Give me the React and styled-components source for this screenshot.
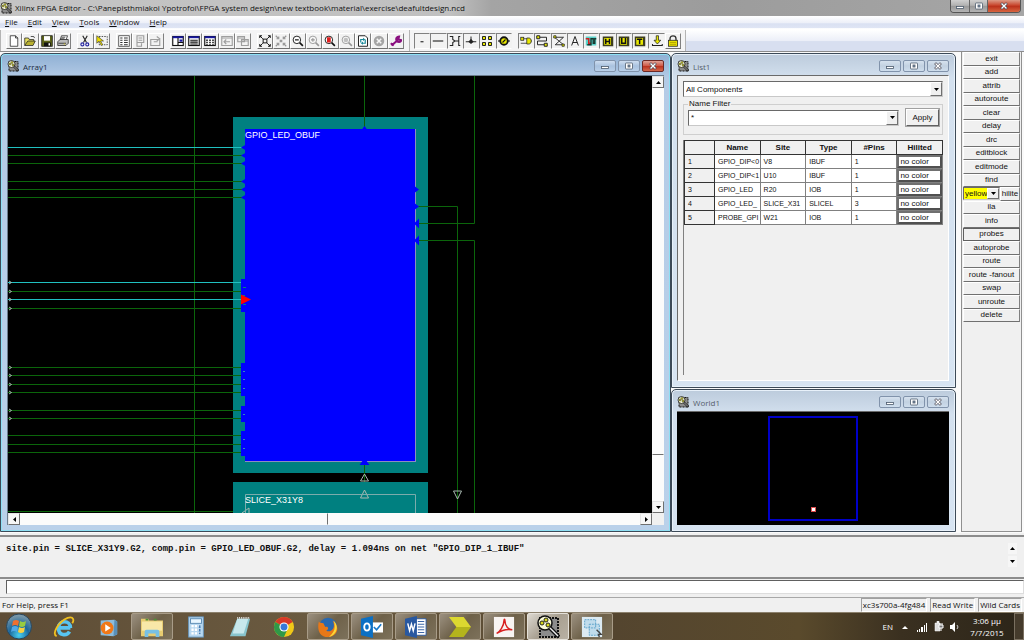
import React from 'react';
import styled, { createGlobalStyle, css } from 'styled-components';

const GlobalStyle = createGlobalStyle`
  * {
    box-sizing: border-box;
  }

  body {
    margin: 0;
    background: #f0f0f0;
    color: #111;
    font-family: 'Open Sans', 'Noto Sans', sans-serif;
    font-size: 8px;
  }

  button, input, select {
    margin: 0;
    padding: 0;
    border: 0;
    border-radius: 0;
    color: inherit;
    font: inherit;
  }

  svg {
    display: block;
  }
`;

const ui = css`
  font-family: 'Liberation Sans', Arial, sans-serif;
  font-size: 8px;
`;

const Page = styled.div`
  display: flex;
  flex-direction: column;
  height: 100vh;
  min-height: 480px;
  overflow: hidden;
`;

const TitleBar = styled.header`
  display: flex;
  height: 16px;
  background: linear-gradient(90deg, #c4c4c4 0, #c0c0c0 44%, #a4a4a4 48%, #9c9c9c 70%, #a6a6a6 100%);
`;

const AppTitle = styled.h1`
  display: flex;
  flex: 1;
  align-items: center;
  gap: 3px;
  margin: 0;
  font-size: 8px;
  font-weight: 400;
  line-height: 14px;
  white-space: nowrap;
`;

const AppControls = styled.div`
  display: flex;
  height: 13px;
  margin-right: 3px;
  border: 1px solid #555;
  border-top: 0;
  border-radius: 0 0 4px 4px;
  overflow: hidden;
`;

const AppControl = styled.button`
  display: grid;
  place-items: center;
  width: ${props => (props.$close ? 33 : 18)}px;
  background: ${props => (props.$close
    ? 'linear-gradient(#dc9a86, #c8452c 45%, #b92f1a 50%, #d8653f)'
    : 'linear-gradient(#cfcfcf, #b2b2b2 45%, #989898 50%, #b4b4b4)')};
  & + & {
    border-left: 1px solid #666;
  }
`;

const MenuBar = styled.nav`
  display: flex;
  gap: 10px;
  height: 14px;
  padding: 0 0 2px 5px;
  background: linear-gradient(#fff, #eceff8 50%, #dae1f2 55%, #dfe5f4 85%, #fff 90%);
`;

const MenuItem = styled.button`
  background: none;
  line-height: 12px;
`;

const ToolStrip = styled.div`
  display: flex;
  height: 22px;
  border-bottom: 1px solid #8c8c8c;
  background: linear-gradient(#fff, #eceff8 50%, #d8dff0 55%, #d8dff0);
`;

const ToolBand = styled.div`
  display: flex;
  align-items: center;
  gap: 6px;
  padding: 0 5px;
  border-left: 1px solid #b4b4b4;
  background: #f4f4f5;
  &:last-child {
    border-right: 1px solid #b4b4b4;
    padding: 0 4px;
  }
`;

const ToolGroup = styled.div`
  display: grid;
  grid-template-columns: repeat(${props => props.$count}, 1fr);
  width: ${props => props.$width}px;
`;

const ToolButton = styled.button`
  display: grid;
  place-items: center;
  height: 16px;
  background: #f2f2f2;
  border: 1px solid;
  border-color: ${props => (props.$flat
    ? '#808080 #f2f2f2 #fff #808080'
    : '#fff #808080 #707070 #fff')};
`;

const ToolIcon = styled.svg`
  opacity: ${props => (props.$dim ? 0.4 : 1)};
`;

const Workspace = styled.main`
  display: grid;
  flex: 1;
  grid-template-columns: minmax(0, 1fr) 285px 68px;
  min-height: 0;
  background: #fafafa;
`;

const SideColumn = styled.div`
  display: flex;
  flex-direction: column;
  gap: 1px;
  padding: 1px 0;
`;

const Frame = styled.section`
  display: flex;
  flex-direction: column;
  flex: ${props => props.$flex || '1'};
  min-width: 0;
  min-height: 0;
  padding: 0 6px 6px ${props => (props.$active ? 6 : 5)}px;
  border: 1px solid #3c4a58;
  border-radius: 5px 5px 0 0;
  background: ${props => (props.$active
    ? 'linear-gradient(#8fb0d4, #b4cbe6 24px, #bad1ea 100%)'
    : 'linear-gradient(#bccbdc, #d3e0ee 24px, #d7e4f2 100%)')};
  box-shadow: inset 0 0 0 1px ${props => (props.$active ? '#8fe0f4' : '#e8f1fa')};
`;

const ArrayColumn = styled.div`
  display: flex;
  min-width: 0;
  min-height: 0;
  padding: 1px 0;
`;

const FrameHead = styled.div`
  display: flex;
  flex: none;
  align-items: center;
  gap: 4px;
  height: 21px;
  padding-top: 3px;
  color: ${props => (props.$active ? '#1b2a3c' : '#55606c')};
`;

const FrameTitle = styled.h2`
  flex: 1;
  margin: 0;
  font-size: 8px;
  font-weight: 400;
`;

const FrameControls = styled.div`
  display: flex;
  gap: 2px;
`;

const FrameControl = styled.button`
  display: grid;
  place-items: center;
  width: 22px;
  height: 12px;
  border: 1px solid ${props => (props.$red ? '#6d2a26' : '#8193ab')};
  border-radius: 2px;
  background: ${props => (props.$red
    ? 'linear-gradient(#e0a397, #cf5a48 48%, #bb3220 52%, #d2684c)'
    : props.$active
      ? 'linear-gradient(#cfdef0, #a9c2df 50%, #b9d0ea)'
      : 'linear-gradient(#d6e2ee, #c2d1e1 50%, #cfdeed)')};
`;

const ArrayBody = styled.div`
  display: grid;
  flex: 1;
  grid-template: minmax(0, 1fr) 12px / minmax(0, 1fr) 12px;
  min-height: 0;
  border: 1px solid #6c7c8c;
  border-width: 1px 0 0 1px;
  background: #f0f0f0;
`;

const Sheet = styled.svg`
  width: 100%;
  height: 100%;
  background: #000;
  font-family: 'Liberation Sans', Arial, sans-serif;
  font-size: 9px;
`;

const ScrollBar = styled.div`
  display: flex;
  flex-direction: ${props => (props.$vertical ? 'column' : 'row')};
  min-width: 0;
  min-height: 0;
  background: #fbfbfb;
`;

const ScrollArrow = styled.button`
  display: grid;
  place-items: center;
  flex: none;
  width: 12px;
  height: 12px;
  border: 1px solid;
  border-color: #e4e4e4 #707070 #707070 #e4e4e4;
  background: #f6f6f6;
`;

const Thumb = styled.div`
  flex: ${props => props.$grow} 0 0;
  border: 1px solid;
  border-color: ${props => (props.$vertical ? '#fbfbfb #fbfbfb #707070' : '#fbfbfb #707070 #fbfbfb #fbfbfb')};
`;

const Track = styled.div`
  flex: ${props => props.$grow} 0 0;
`;

const ListBody = styled.div`
  ${ui}
  display: flex;
  flex: 1;
  flex-direction: column;
  min-height: 0;
  padding: 5px;
  border: 1px solid;
  border-color: #6a6a6a #fff #fff #6a6a6a;
  background: #f0f0f0;
`;

const Combo = styled.div`
  position: relative;
  display: flex;
  flex: ${props => (props.$grow ? '1' : 'none')};
  height: ${props => props.$height || 16}px;
  border: 1px solid;
  border-color: #696969 #c8c8c8 #c8c8c8 #696969;
  background: #fff;
`;

const Select = styled.select`
  flex: 1;
  width: 100%;
  padding-left: 2px;
  appearance: none;
  background: #fff;
`;

const ComboInput = styled.input`
  flex: 1;
  width: 100%;
  min-width: 0;
  padding-left: 2px;
`;

const ComboArrow = styled.span`
  position: absolute;
  top: 0;
  right: 0;
  bottom: 0;
  display: grid;
  place-items: center;
  width: 12px;
  border: 1px solid;
  border-color: #fff #707070 #707070 #fff;
  background: #f0f0f0;
  pointer-events: none;
`;

const FilterBox = styled.fieldset`
  display: flex;
  align-items: center;
  gap: 7px;
  min-width: 0;
  height: 36px;
  margin: 2px 0 5px;
  padding: 0 3px 0 4px;
  border: 1px solid #cfcfcf;
  line-height: 10px;
`;

const Legend = styled.legend`
  padding: 0 1px;
`;

const ApplyButton = styled.button`
  width: 33px;
  height: 17px;
  border: 1px solid;
  border-color: #fff #606060 #606060 #fff;
  outline: 1px solid #a0a0a0;
  background: #f0f0f0;
`;

const GridBox = styled.div`
  flex: 1;
  min-height: 0;
  border-left: 1px solid #808080;
`;

const Grid = styled.table`
  width: 100%;
  border-collapse: collapse;
  table-layout: fixed;
  font-size: 7px;
  line-height: 9px;
  th, td {
    height: 14px;
    padding: 0 3px;
    border: 1px solid #808080;
    background: #fff;
    text-align: left;
    font-weight: 400;
    white-space: nowrap;
    overflow: hidden;
  }
  thead th {
    border-color: #333;
    background: #f0f0f0;
    font-size: 8px;
    font-weight: 700;
    text-align: center;
  }
  tbody th {
    padding: 0 3px;
    border-color: #333;
    background: #f0f0f0;
  }
  tbody td:last-child {
    padding: 0;
  }
`;

const ColorButton = styled.button`
  display: block;
  width: 100%;
  height: 13px;
  padding: 0 1px;
  border: 2px solid;
  border-color: #707070 #505050 #505050 #707070;
  background: #fff;
  font-size: 8px;
  line-height: 8px;
  text-align: left;
`;

const World = styled.svg`
  flex: 1;
  width: 100%;
  min-height: 0;
  border-top: 1px solid #6a6a6a;
  background: #000;
`;

const CommandPanel = styled.aside`
  ${ui}
  margin: 0 2px 1px 5px;
  padding: 0 1px;
  border: 1px solid #909090;
  border-top: 0;
  background: #f0f0f0;
`;

const CommandList = styled.div`
  display: grid;
  grid-auto-rows: 1fr;
  height: 270px;
`;

const Command = styled.button`
  min-width: 0;
  border: 1px solid;
  border-color: #fff #808080 #707070 #fff;
  background: #f0f0f0;
  line-height: 10px;
  white-space: nowrap;
  ${props => props.$boxed && 'border-color: #606060;'}
`;

const HiliteRow = styled.div`
  display: grid;
  grid-template-columns: 37px minmax(0, 1fr);
`;

const ColorSelect = styled(Select)`
  padding-left: 1px;
  background: linear-gradient(90deg, #ffff00 24px, #fff 24px);
`;

const Console = styled.section`
  display: flex;
  height: 44px;
  margin-top: 2px;
  padding: 5px 7px 5px 6px;
  border-top: 2px solid #8c8c8c;
  border-bottom: 2px solid #8c8c8c;
  background: #f0f0f0;
`;

const ConsoleText = styled.output`
  flex: 1;
  font: 700 9px/14px 'Liberation Mono', 'Courier New', monospace;
  white-space: pre;
`;

const ConsoleScroll = styled.div`
  display: flex;
  flex-direction: column;
  justify-content: space-between;
  padding: 1px 0 5px;
`;

const TinyArrow = styled.button`
  display: grid;
  place-items: center;
  width: 9px;
  height: 11px;
  background: #f6f6f6;
`;

const CommandLine = styled.div`
  flex: none;
  padding: 1px 0 3px 6px;
  border-bottom: 1px solid #a8a8a8;
`;

const CommandInput = styled.input`
  display: block;
  width: 100%;
  height: 14px;
  padding: 0 4px;
  border: 1px solid;
  border-color: #606060 #ddd #ddd #606060;
  background: #fff;
`;

const StatusBar = styled.footer`
  display: flex;
  gap: 3px;
  height: 14px;
  padding: 0 2px;
  line-height: 13px;
`;

const Hint = styled.span`
  flex: 1;
`;

const StatusCell = styled.span`
  padding: 0 1px;
  border: 1px solid;
  border-color: #a0a0a0 #fff #fff #a0a0a0;
  line-height: 12px;
`;

const TaskBar = styled.div`
  display: flex;
  gap: 2px;
  height: 28px;
  border-top: 1px solid #8b806c;
  background: linear-gradient(90deg, #5e4d36, #6a5a40 30%, #54452f 60%, #5a4a2c 78%, #3a3020 88%, #2c2519);
`;

const Task = styled.button`
  display: grid;
  place-items: center;
  width: 42px;
  background: none;
  ${props => props.$open && css`
    border: 1px solid #a89c88;
    border-radius: 2px;
    background: linear-gradient(135deg, #9b9080, #6e6149 50%, #7d715b);
  `}
  ${props => props.$front && css`
    background: linear-gradient(135deg, #dcd8d0, #a89f90 50%, #b9b1a4);
    border-color: #e4e0d8;
  `}
`;

const StartButton = styled(Task)`
  width: 41px;
  padding-right: 3px;
`;

const Tray = styled.div`
  display: flex;
  flex: 1;
  justify-content: flex-end;
  align-items: center;
  gap: 6px;
  color: #fff;
`;

const TrayButton = styled.button`
  background: none;
`;

const Clock = styled.time`
  width: 42px;
  line-height: 12px;
  text-align: center;
`;

const ShowDesktop = styled.button`
  align-self: stretch;
  width: 10px;
  border: 1px solid #7a7060;
  background: #453b2c;
`;

const Chip = ({ size = 12 }) => (
  <svg width={size} height={size} viewBox="0 0 24 24" aria-hidden="true">
    <rect x="4" y="3" width="18" height="19" fill="#8c8c8c" stroke="#111" strokeWidth="2" strokeDasharray="2 1" />
    <circle cx="9" cy="8" r="7" fill="#fafad8" stroke="#111" strokeWidth="1.5" />
    <g fill="#d8d81a" stroke="#222" strokeWidth="1">
      <circle cx="6" cy="8" r="2" />
      <circle cx="10" cy="5" r="2" />
      <circle cx="12" cy="10" r="2" />
    </g>
    <path d="M14 13l9 9" stroke="#111" strokeWidth="4" />
    <path d="M14 13l8 8" stroke="#eee" strokeWidth="1.5" />
  </svg>
);

const Arrow = ({ dir = 'down' }) => {
  const turn = { down: 0, left: 90, up: 180, right: 270 }[dir];
  return (
    <svg width="7" height="7" viewBox="0 0 7 7" aria-hidden="true">
      <path d="M1 2h5L3.5 5z" fill="#000" transform={`rotate(${turn} 3.5 3.5)`} />
    </svg>
  );
};

const ControlIcon = ({ kind }) => (
  <svg width="10" height="8" viewBox="0 0 10 8" aria-hidden="true">
    {kind === 'Minimize' && <rect x="1.5" y="4.5" width="7" height="2" fill="#fff" stroke="#4b5a6c" strokeWidth=".8" />}
    {kind === 'Maximize' && (
      <g fill="#fff" stroke="#4b5a6c" strokeWidth=".8">
        <rect x="1.5" y="1" width="7" height="6" rx=".5" />
        <rect x="4" y="3" width="2" height="2" fill="#8aa0b8" />
      </g>
    )}
    {kind === 'Close' && (
      <g strokeLinecap="square">
        <path d="M3 2l4 4M7 2L3 6" stroke="#4b4a56" strokeWidth="2.6" />
        <path d="M3 2l4 4M7 2L3 6" stroke="#fff" strokeWidth="1.3" />
      </g>
    )}
  </svg>
);

const zoomGlass = fill => (
  <g>
    <path d="M9.5 9.5l5 5" stroke="#111" strokeWidth="2.2" />
    <circle cx="6.5" cy="6.5" r="5" fill="#fff" stroke="#222" strokeWidth="1.3" />
    {fill}
  </g>
);

const letterBox = letter => (
  <g>
    <rect x="1" y="2" width="14" height="13" fill="#3c3c20" />
    <rect x="3" y="4" width="9" height="9" fill="#e8e800" />
    <path d={letter} stroke="#111" strokeWidth="2" fill="none" />
  </g>
);

const icons = {
  New: <path d="M3 1h7l3 3v11H3zM10 1v3h3" fill="#fff" stroke="#222" />,
  Open: (
    <g stroke="#222">
      <path d="M1 14V4h5l1 2h6v3" fill="#e8e060" />
      <path d="M1 14l4-6h10l-3 6z" fill="#b8b030" />
      <path d="M9 2h4l1 2" fill="none" />
    </g>
  ),
  Save: (
    <g>
      <rect x="1" y="1" width="14" height="14" fill="#5c6418" stroke="#111" />
      <rect x="4" y="1.5" width="8" height="6" fill="#fff" />
      <path d="M4 10h9v5H4z" fill="#111" />
      <path d="M10 11h2v3h-2z" fill="#fff" />
    </g>
  ),
  Print: (
    <g stroke="#222">
      <path d="M4 7l2-6h8l-2 6z" fill="#fff" />
      <path d="M1 9l3-3h11v5l-3 3H1z" fill="#bbb" />
      <path d="M6 3h5M5 5h5M2 11h10" fill="none" />
      <path d="M9 12h2" stroke="#d8c800" />
    </g>
  ),
  Cut: (
    <g fill="none" strokeWidth="1.5">
      <path d="M5 1l5 9M11 1L6 10" stroke="#222" />
      <circle cx="4.5" cy="12.5" r="2" stroke="#2020a0" />
      <circle cx="11" cy="12.5" r="2" stroke="#2020a0" />
    </g>
  ),
  SelectArea: (
    <g>
      <rect x="4" y="2" width="11" height="11" fill="none" stroke="#222" strokeDasharray="2 1.5" />
      <path d="M1 1v10l3-3 3 6 2-1-3-5h4z" fill="#f0e000" stroke="#333" strokeWidth=".8" />
    </g>
  ),
  Properties: (
    <g stroke="#333" fill="#fff">
      <rect x="1" y="1" width="14" height="14" />
      <path d="M3 4h3M8 4h5M3 7h3M8 7h5M3 10h3M8 10h5M3 13h3M8 13h5" strokeWidth="1.6" />
    </g>
  ),
  Sheet: <path d="M4 1h9v9H4zM6 4h5M6 7h5M4 10v5h6v-4" fill="none" stroke="#222" strokeWidth="1.5" />,
  Export: <path d="M1 6h12v8H1zM5 9h5M9 2l4 3-4 3" fill="none" stroke="#222" strokeWidth="1.5" />,
  ArrayView: (
    <g>
      <rect x="1" y="2" width="14" height="12" fill="#fff" stroke="#111" strokeWidth="1.5" />
      <path d="M1 3h14" stroke="#1818a0" strokeWidth="2.5" />
      <path d="M8 4v10M8 10h7" stroke="#111" strokeWidth="1.5" />
      <rect x="10" y="6" width="4" height="3" fill="#1818a0" />
    </g>
  ),
  ListView: (
    <g>
      <rect x="1" y="2" width="14" height="12" fill="#fff" stroke="#111" strokeWidth="1.5" />
      <path d="M1 3h14" stroke="#1818a0" strokeWidth="2.5" />
      <path d="M3 7h10M3 9.5h10M3 12h10" stroke="#111" strokeWidth="1.6" />
    </g>
  ),
  TableView: (
    <g>
      <rect x="1" y="2" width="14" height="12" fill="#fff" stroke="#111" strokeWidth="1.5" />
      <path d="M1 3h14" stroke="#1818a0" strokeWidth="2.5" />
      <path d="M4 6v7M8 6v7M12 6v7" stroke="#111" strokeWidth="2" strokeDasharray="2 1" />
    </g>
  ),
  Back: <path d="M1 2h14v12H1zM1 4h14M4 9h8M7 6L4 9l3 3" fill="none" stroke="#222" strokeWidth="1.5" />,
  Cascade: <path d="M1 2h9v7H1zM6 6h9v8H6zM1 4h9M6 8h9" fill="none" stroke="#222" strokeWidth="1.5" />,
  FitAll: (
    <g fill="none" stroke="#111" strokeWidth="1.3">
      <path d="M1 4V1h3M12 1h3v3M15 12v3h-3M4 15H1v-3M1 1l4 4M15 1l-4 4M15 15l-4-4M1 15l4-4" />
      <rect x="5.5" y="5.5" width="5" height="5" />
    </g>
  ),
  FitSel: <path d="M2 5h3V2M11 2v3h3M14 11h-3v3M5 14v-3H2M1 1l3 3M15 1l-3 3M15 15l-3-3M1 15l3-3M7 7h2v2H7z" fill="none" stroke="#111" strokeWidth="1.5" />,
  ZoomOut: zoomGlass(<path d="M4 6.5h5" stroke="#111" strokeWidth="1.6" />),
  ZoomIn: zoomGlass(<path d="M4 6.5h5M6.5 4v5" stroke="#111" strokeWidth="1.4" />),
  ZoomBox: zoomGlass(<rect x="4" y="3" width="5" height="7" fill="#e02020" />),
  ZoomSel: zoomGlass(<circle cx="6.5" cy="6.5" r="3" fill="#777" />),
  Refresh: (
    <g>
      <path d="M2 1h9l3 3v11H2z" fill="#fff" stroke="#222" strokeWidth="1.3" />
      <path d="M5 10V6h4M11 6v5H7" fill="none" stroke="#1c8a9a" strokeWidth="1.6" />
      <path d="M8 3.5L11 6 8 8zM8 8.5L5 11l3 2z" fill="#1c8a9a" />
    </g>
  ),
  Stop: (
    <g>
      <circle cx="8" cy="8" r="7" fill="#333" />
      <path d="M5 5l6 6M11 5l-6 6" stroke="#fff" strokeWidth="2" />
    </g>
  ),
  Wrench: <path d="M2 14l7-6M9 8c-2-4 1-6 3-6l-1 4 4 1c-1 3-4 3-6 1M1 11l4 3" fill="none" stroke="#8a1080" strokeWidth="2.8" />,
  Pin: <path d="M6 9h4" stroke="#222" strokeWidth="1.5" />,
  Wire: <path d="M1 8h14" stroke="#222" strokeWidth="1.5" />,
  Switch: <path d="M1 2h4v4l3 2-3 2v4H1M8 8h5M15 2h-2v12h2" fill="none" stroke="#222" strokeWidth="1.4" />,
  Node: (
    <g>
      <path d="M1 9h14M8 2v7" stroke="#222" strokeWidth="1.3" />
      <path d="M4.5 9L8 5l3.500 4L8 12z" fill="#222" />
    </g>
  ),
  Blocks: <path d="M2 2h4v4H2zM10 2h4v4h-4zM2 10h4v4H2zM10 10h4v4h-4z" fill="#e8e800" stroke="#111" strokeWidth="1.2" />,
  Probe: (
    <g>
      <path d="M0 8h16" stroke="#111" strokeWidth="1.5" />
      <circle cx="8" cy="8" r="5" fill="#e8e800" stroke="#111" strokeWidth="2.4" />
      <path d="M6 10l4-4" stroke="#111" strokeWidth="1.5" />
    </g>
  ),
  Component: (
    <g stroke="#222" fill="#e8e800">
      <rect x="1" y="3" width="4" height="4" />
      <path d="M9 4h3c4 0 4 8 0 8H9z" />
      <path d="M5 5h4M1 11h8M15 8h1" />
    </g>
  ),
  Route: (
    <g stroke="#222" strokeWidth="1.3">
      <path d="M5 3h9v5H2v5h9" fill="none" />
      <path d="M1 1h4v4H1zM11 11h4v4h-4z" fill="#e8e800" />
    </g>
  ),
  Rats: (
    <g stroke="#222" fill="#e8e800">
      <path d="M1 3h13L3 13h12M2 3l12 10" fill="none" strokeWidth="1.2" />
      <path d="M1 1h3v3H1zM12 12h3v3h-3z" />
    </g>
  ),
  Text: <path d="M3.5 14L8 2l4.500 12M5 10h6" fill="none" stroke="#222" strokeWidth="1.3" />,
  Wave: (
    <g>
      <rect x="1" y="2" width="14" height="12" fill="#58d0c8" />
      <path d="M1 5h4v6h3" fill="none" stroke="#d02020" strokeWidth="2" />
      <path d="M3 13h5V5h3v6h2V5h2" fill="none" stroke="#183830" strokeWidth="1.8" />
    </g>
  ),
  Hard: letterBox('M5 5v7M10 5v7M5 8.5h5'),
  User: letterBox('M5 4v7h5V4'),
  Timing: letterBox('M4 5.5h7M7.5 5v7'),
  Download: (
    <g>
      <path d="M7 1h3v6h3l-4.500 5L4 7h3z" fill="#e8e800" stroke="#222" />
      <path d="M2 12v2h13v-2" fill="none" stroke="#222" strokeWidth="1.4" />
    </g>
  ),
  Lock: (
    <g>
      <path d="M4 8V5c0-5 8-5 8 0v3" fill="none" stroke="#333" strokeWidth="1.8" />
      <rect x="2" y="7" width="12" height="8" fill="#e8e000" stroke="#222" />
      <path d="M4 10h8M4 12.5h8" stroke="#a89800" />
    </g>
  ),
};

const mainTools = [
  { width: 65, names: ['New', 'Open', 'Save', 'Print'] },
  { width: 33, names: ['Cut', 'SelectArea'] },
  { width: 48, names: ['Properties', 'Sheet', 'Export'] },
  { width: 81, names: ['ArrayView', 'ListView', 'TableView', 'Back', 'Cascade'] },
  { width: 147, names: ['FitAll', 'FitSel', 'ZoomOut', 'ZoomIn', 'ZoomBox', 'ZoomSel', 'Refresh', 'Stop', 'Wrench'] },
];

const layerTools = [
  { width: 98, names: ['Pin', 'Wire', 'Switch', 'Node', 'Blocks', 'Probe'] },
  { width: 163, names: ['Component', 'Route', 'Rats', 'Text', 'Wave', 'Hard', 'User', 'Timing', 'Download', 'Lock'] },
];

const disabled = ['Sheet', 'Export', 'Back', 'Cascade', 'FitSel', 'ZoomIn', 'ZoomSel', 'Stop'];

const Tools = ({ groups, flat }) => groups.map(group => (
  <ToolGroup key={group.names[0]} $count={group.names.length} $width={group.width}>
    {group.names.map(name => (
      <ToolButton key={name} aria-label={name} $flat={flat && name !== 'Lock'}>
        <ToolIcon width="12" height="12" viewBox="0 0 16 16" $dim={disabled.includes(name)}>
          {icons[name]}
        </ToolIcon>
      </ToolButton>
    ))}
  </ToolGroup>
));

const menus = ['File', 'Edit', 'View', 'Tools', 'Window', 'Help'];

const components = [
  ['GPIO_DIP<0', 'V8', 'IBUF', 1],
  ['GPIO_DIP<1', 'U10', 'IBUF', 1],
  ['GPIO_LED', 'R20', 'IOB', 1],
  ['GPIO_LED_', 'SLICE_X31', 'SLICEL', 3],
  ['PROBE_GPI', 'W21', 'IOB', 1],
];

const commandsTop = ['exit', 'add', 'attrib', 'autoroute', 'clear', 'delay', 'drc', 'editblock', 'editmode', 'find'];
const commandsBottom = ['ila', 'info', 'probes', 'autoprobe', 'route', 'route -fanout', 'swap', 'unroute', 'delete'];

const WindowFrame = ({ title, active, flex, children }) => (
  <Frame $active={active} $flex={flex}>
    <FrameHead $active={active}>
      <Chip />
      <FrameTitle>{title}</FrameTitle>
      <FrameControls>
        {['Minimize', 'Maximize', 'Close'].map(kind => (
          <FrameControl key={kind} aria-label={kind} $active={active} $red={active && kind === 'Close'}>
            <ControlIcon kind={kind} />
          </FrameControl>
        ))}
      </FrameControls>
    </FrameHead>
    {children}
  </Frame>
);

// wires entering the slice from the left, by y
const greenWires = [155, 163, 181, 189, 197, 291, 308, 367, 375, 384, 392, 410, 418, 435, 444, 452];
const cyanWires = [147, 282, 299];
const outPins = [282, 291, 299, 308, 367, 375, 384, 392, 410, 418];
const smallPins = [147, 155, 163, 181, 189, 197];
const dotPins = [371, 379, 388, 414, 439, 448];

const ArraySheet = () => (
  <Sheet role="img" aria-label="Slice layout">
    <g transform="translate(-8 -76)">
      <rect x="233" y="117" width="195" height="356" fill="#008080" />
      <rect x="233" y="482" width="195" height="60" fill="#008080" />
      <g stroke="#0b650b" fill="none">
        {greenWires.map(y => <path key={y} d={`M8 ${y}.5H245`} />)}
        <path d="M8 511.5H233M194.5 76V540M364.5 76V128M364.5 464V482" />
        <path d="M418 206.5H457.5V540M418 223.5H474.5V76M418 240.5H474.5V540" />
      </g>
      <rect x="245.5" y="129.5" width="170" height="332" fill="#0000ff" stroke="#8c8cc0" />
      <path d="M245 129h170v1h-169v331h-1z" fill="#0000ff" />
      <g stroke="#20c0c0">
        {cyanWires.map(y => <path key={y} d={`M8 ${y}.5H245`} />)}
      </g>
      <g fill="#0000ff">
        {smallPins.map(y => <path key={y} d={`M241 ${y}.5l5-3v6z`} />)}
        <path d="M241 279h5v33h-5zM241 363h5v33h-5zM241 406h5v16h-5zM241 431h5v25h-5z" />
        <path d="M419 189.5l-4-3v6zM419 206.5l-4-3v6zM414 223.5l5-5v10zM414 240.5l5-5v10z" />
        <path d="M364.5 126l3 4h-6zM364.5 458l5 7h-10z" />
      </g>
      <path d="M243 287h3v1h-3zM243 304h3v1h-3zM241 295h4v1h-4z" fill="#008080" />
      {dotPins.map(y => <rect key={y} x="243" y={y} width="2" height="1" fill="#3088b8" />)}
      <path d="M241 294.5v10l10-5z" fill="#f00" />
      <g fill="none" stroke="#a8b8b0">
        {outPins.map(y => <path key={y} d={`M9 ${y - 1}l2.500 1.500-2.500 1.500`} />)}
        <path d="M364.5 474l4 7h-8zM364.5 490l4 8h-8zM457.5 499l-4-8h8zM242 513l7-5v8z" />
        <path d="M245.5 540V494.5H415.5V540" stroke="#7cacac" />
      </g>
      <text x="245" y="138" fill="#fff">GPIO_LED_OBUF</text>
      <text x="245" y="503" fill="#fff">SLICE_X31Y8</text>
    </g>
  </Sheet>
);

const ArrayWindow = () => (
  <ArrayColumn>
    <WindowFrame title="Array1" active>
      <ArrayBody>
        <ArraySheet />
        <ScrollBar $vertical>
          <ScrollArrow aria-label="Scroll up"><Arrow dir="up" /></ScrollArrow>
          <Thumb $vertical $grow={367} />
          <Track $grow={46} />
          <ScrollArrow aria-label="Scroll down"><Arrow /></ScrollArrow>
        </ScrollBar>
        <ScrollBar>
          <ScrollArrow aria-label="Scroll left"><Arrow dir="left" /></ScrollArrow>
          <Thumb $grow={306} />
          <Track $grow={313} />
          <ScrollArrow aria-label="Scroll right"><Arrow dir="right" /></ScrollArrow>
        </ScrollBar>
      </ArrayBody>
    </WindowFrame>
  </ArrayColumn>
);

const ListWindow = () => (
  <WindowFrame title="List1" flex="1">
    <ListBody>
      <Combo>
        <Select aria-label="Component type" defaultValue="All Components">
          <option>All Components</option>
        </Select>
        <ComboArrow><Arrow /></ComboArrow>
      </Combo>
      <FilterBox>
        <Legend>Name Filter</Legend>
        <Combo $grow>
          <ComboInput aria-label="Name Filter" defaultValue="*" />
          <ComboArrow><Arrow /></ComboArrow>
        </Combo>
        <ApplyButton>Apply</ApplyButton>
      </FilterBox>
      <GridBox>
        <Grid>
          <colgroup>
            <col width="30" />
            <col span="5" />
          </colgroup>
          <thead>
            <tr>
              <th aria-label="Row" />
              <th>Name</th>
              <th>Site</th>
              <th>Type</th>
              <th>#Pins</th>
              <th>Hilited</th>
            </tr>
          </thead>
          <tbody>
            {components.map((cells, index) => (
              <tr key={index}>
                <th>{index + 1}</th>
                {cells.map((cell, i) => <td key={i}>{cell}</td>)}
                <td><ColorButton>no color</ColorButton></td>
              </tr>
            ))}
          </tbody>
        </Grid>
      </GridBox>
    </ListBody>
  </WindowFrame>
);

const WorldWindow = () => (
  <WindowFrame title="World1" flex="0 0 143px">
    <World viewBox="0 0 272 113" role="img" aria-label="Device overview">
      <rect x="92" y="5" width="88" height="103" fill="none" stroke="#0000c8" strokeWidth="2" />
      <rect x="134" y="95" width="5" height="5" fill="#e05050" />
      <rect x="135" y="96" width="3" height="3" fill="#fff" />
    </World>
  </WindowFrame>
);

const Commands = () => (
  <CommandPanel>
    <CommandList>
      {commandsTop.map(name => <Command key={name}>{name}</Command>)}
      <HiliteRow>
        <Combo $height={13}>
          <ColorSelect aria-label="Hilite color" defaultValue="yellow">
            <option>yellow</option>
          </ColorSelect>
          <ComboArrow><Arrow /></ComboArrow>
        </Combo>
        <Command>hilite</Command>
      </HiliteRow>
      {commandsBottom.map(name => <Command key={name} $boxed={name === 'probes'}>{name}</Command>)}
    </CommandList>
  </CommandPanel>
);

const tasks = [
  {
    name: 'Internet Explorer',
    icon: (
      <g fill="none">
        <path d="M19 13H6c0-9 13-9 13 0M6 13c0 9 9 9 12 4" stroke="#58c4f0" strokeWidth="4" />
        <path d="M4 22c-6-2 2-16 12-20 7-2 7 3 5 6" stroke="#f0c020" strokeWidth="2" />
      </g>
    ),
  },
  {
    name: 'Media Player',
    icon: (
      <g>
        <path d="M4 5l15-1 3 2v14l-4 2-14-1z" fill="#8cbcdc" />
        <path d="M19 4l3 2v14l-4 2z" fill="#5a90b8" />
        <circle cx="11" cy="13" r="7" fill="#f07818" />
        <path d="M9 9l6 4-6 4z" fill="#fff" />
      </g>
    ),
  },
  {
    name: 'Explorer',
    open: true,
    icon: (
      <g>
        <path d="M0 3h8l1 2h15v17H0z" fill="#e8cc70" />
        <path d="M1 6h22v10H1z" fill="#f8e8a8" />
        <path d="M5 3h3v2H5zM14 3h3v2h-3z" fill="#509038" />
        <path d="M4 23v-6q0-2 2-2h12q2 0 2 2v6h-4v-4H8v4z" fill="#78c0e4" />
      </g>
    ),
  },
  {
    name: 'Calculator',
    icon: (
      <g>
        <rect x="4" y="1" width="16" height="22" fill="#b8d8f0" stroke="#6898c0" />
        <rect x="6" y="3" width="12" height="5" fill="#e8f6ff" stroke="#5888b0" />
        <path d="M7 11h10M7 15h10M7 19h10" stroke="#fff" strokeWidth="2.5" strokeDasharray="2.5 1.2" />
        <path d="M16 10v10" stroke="#4880b8" strokeWidth="2" strokeDasharray="3 1" />
      </g>
    ),
  },
  {
    name: 'Notepad',
    icon: (
      <g>
        <path d="M9 3h14l-5 19H1z" fill="#88c4cc" />
        <path d="M9 3h12l-5 16H4z" fill="#c8e8ec" />
        <path d="M9 2h14" stroke="#e8e8e8" strokeWidth="2" strokeDasharray="1 1" />
      </g>
    ),
  },
  {
    name: 'Chrome',
    icon: (
      <g>
        <circle cx="12" cy="12" r="11" fill="#f0c818" />
        <path d="M12 12L2.500 6.500a11 11 0 0119 0z" fill="#d83828" />
        <path d="M12 12L2.500 6.500A11 11 0 0012 23l4-9z" fill="#309848" />
        <circle cx="12" cy="12" r="5" fill="#fff" />
        <circle cx="12" cy="12" r="3.8" fill="#3878d8" />
      </g>
    ),
  },
  {
    name: 'Firefox',
    open: true,
    icon: (
      <g>
        <circle cx="12" cy="12" r="10" fill="#2868b0" />
        <path d="M2 6c1 2 3 1 5 2l2 4c4-1 4 3 1 4 6 3 11-4 7-11 8 5 7 17-5 18C2 23 0 14 2 6z" fill="#e87818" />
        <path d="M18 5c7 7 3 16-5 18 6-5 8-11 5-18z" fill="#f8d838" />
      </g>
    ),
  },
  {
    name: 'Outlook',
    open: true,
    icon: (
      <g>
        <path d="M11 7h13v11H11z" fill="#fff" />
        <path d="M14 12l3 3 5-6" fill="none" stroke="#1878c8" strokeWidth="1.8" />
        <path d="M0 3l13-3v24L0 21z" fill="#0c70c4" />
        <ellipse cx="6.5" cy="12" rx="3" ry="4" fill="none" stroke="#fff" strokeWidth="2" />
      </g>
    ),
  },
  {
    name: 'Word',
    open: true,
    icon: (
      <g>
        <path d="M11 3h12v18H11z" fill="#fff" stroke="#2858a0" />
        <path d="M14 6h7M14 9h7M14 12h7M14 15h7M14 18h7" stroke="#2858a0" />
        <path d="M0 3l13-3v24L0 21z" fill="#2858a0" />
        <path d="M3 8l2 8 2-7 2 7 2-8" fill="none" stroke="#fff" strokeWidth="1.6" />
      </g>
    ),
  },
  {
    name: 'ISE',
    open: true,
    icon: (
      <g>
        <path d="M0 1h16l8 11H8z" fill="#dcd830" />
        <path d="M8 12h16l-8 11H0z" fill="#b4b41c" />
      </g>
    ),
  },
  {
    name: 'Reader',
    open: true,
    icon: (
      <g>
        <rect x="1" y="1" width="22" height="22" fill="#f8f4f2" />
        <path d="M4 19c3-1 8-8 8-14 0-2 1-2 1 0 0 6 4 10 8 10-5-1-11 0-17 4z" fill="none" stroke="#d82020" strokeWidth="1.6" />
      </g>
    ),
  },
  { name: 'FPGA Editor', open: true, front: true },
  {
    name: 'Snipping Tool',
    open: true,
    icon: (
      <g>
        <rect x="1" y="1" width="22" height="22" fill="#dceaf2" />
        <path d="M4 4h12v9H4zM9 9h11v12H9z" fill="#c0dcec" stroke="#58a0c8" strokeDasharray="2 1" />
        <path d="M17 15l5 5-3 0 1 3" fill="none" stroke="#444" strokeWidth="1.5" />
      </g>
    ),
  },
];

const StartOrb = () => (
  <svg width="28" height="27" viewBox="0 0 28 27" aria-hidden="true">
    <defs>
      <radialGradient id="orb" cx="50%" cy="85%" r="80%">
        <stop offset="0" stopColor="#48d0f0" />
        <stop offset=".5" stopColor="#1c689c" />
        <stop offset="1" stopColor="#7c98a8" />
      </radialGradient>
    </defs>
    <circle cx="14" cy="13.5" r="12.5" fill="url(#orb)" stroke="#29465c" />
    <path d="M8 8q3-2 6 0l-1 5q-3-2-6 0z" fill="#f07030" />
    <path d="M15 8q3 2 6 0l-1 5q-3 2-6 0z" fill="#98cc40" />
    <path d="M7 14q3-2 6 0l-1 5q-3-2-6 0z" fill="#50a8e8" />
    <path d="M14 14q3 2 6 0l-1 5q-3 2-6 0z" fill="#f8d040" />
  </svg>
);

const Desktop = () => (
  <TaskBar>
    <StartButton aria-label="Start"><StartOrb /></StartButton>
    {tasks.map(task => (
      <Task key={task.name} aria-label={task.name} $open={task.open} $front={task.front}>
        {task.icon ? <svg width="22" height="22" viewBox="0 0 24 24">{task.icon}</svg> : <Chip size={24} />}
      </Task>
    ))}
    <Tray>
      <TrayButton>EN</TrayButton>
      <TrayButton aria-label="Show hidden icons">
        <svg width="12" height="10"><path d="M3 7h6L6 4z" fill="#fff" /></svg>
      </TrayButton>
      <TrayButton aria-label="Network">
        <svg width="11" height="10"><path d="M0 8h1v2H0zM2 7h1v3H2zM4 5h2v5H4zM7 3h1v7H7zM9 1h1v9H9z" fill="#fff" /></svg>
      </TrayButton>
      <TrayButton aria-label="Power">
        <svg width="10" height="11">
          <path d="M1 2h5v8H1zM3 0h2v2H3z" fill="#ddd" stroke="#fff" strokeWidth=".5" />
          <path d="M5 4h4v3H5zM7 7v3M6 2v2M8 2v2" stroke="#fff" fill="#777" />
        </svg>
      </TrayButton>
      <TrayButton aria-label="Volume">
        <svg width="10" height="10"><path d="M0 3h2l3-3v10L2 7H0z" fill="#fff" /><path d="M7 3q2 2 0 4" fill="none" stroke="#ccc" /></svg>
      </TrayButton>
      <Clock>3:06 μμ<br />7/7/2015</Clock>
      <ShowDesktop aria-label="Show desktop" />
    </Tray>
  </TaskBar>
);

const App = () => (
  <Page>
    <GlobalStyle />
    <TitleBar>
      <AppTitle>
        <Chip />
        {'Xilinx FPGA Editor - C:\\Panepisthmiakoi Ypotrofoi\\FPGA system design\\new textbook\\material\\exercise\\deafultdesign.ncd'}
      </AppTitle>
      <AppControls>
        {['Minimize', 'Maximize', 'Close'].map(kind => (
          <AppControl key={kind} aria-label={kind} $close={kind === 'Close'}>
            <ControlIcon kind={kind} />
          </AppControl>
        ))}
      </AppControls>
    </TitleBar>
    <MenuBar>
      {menus.map(menu => (
        <MenuItem key={menu}><u>{menu[0]}</u>{menu.slice(1)}</MenuItem>
      ))}
    </MenuBar>
    <ToolStrip>
      <ToolBand><Tools groups={mainTools} /></ToolBand>
      <ToolBand><Tools groups={layerTools} flat /></ToolBand>
    </ToolStrip>
    <Workspace>
      <ArrayWindow />
      <SideColumn>
        <ListWindow />
        <WorldWindow />
      </SideColumn>
      <Commands />
    </Workspace>
    <Console>
      <ConsoleText>site.pin = SLICE_X31Y9.G2, comp.pin = GPIO_LED_OBUF.G2, delay = 1.094ns on net "GPIO_DIP_1_IBUF"</ConsoleText>
      <ConsoleScroll>
        <TinyArrow aria-label="Older messages"><Arrow dir="up" /></TinyArrow>
        <TinyArrow aria-label="Newer messages"><Arrow /></TinyArrow>
      </ConsoleScroll>
    </Console>
    <CommandLine>
      <CommandInput aria-label="Command" />
    </CommandLine>
    <StatusBar>
      <Hint>For Help, press F1</Hint>
      <StatusCell>xc3s700a-4fg484</StatusCell>
      <StatusCell>Read Write</StatusCell>
      <StatusCell>Wild Cards</StatusCell>
    </StatusBar>
    <Desktop />
  </Page>
);

export default App;
